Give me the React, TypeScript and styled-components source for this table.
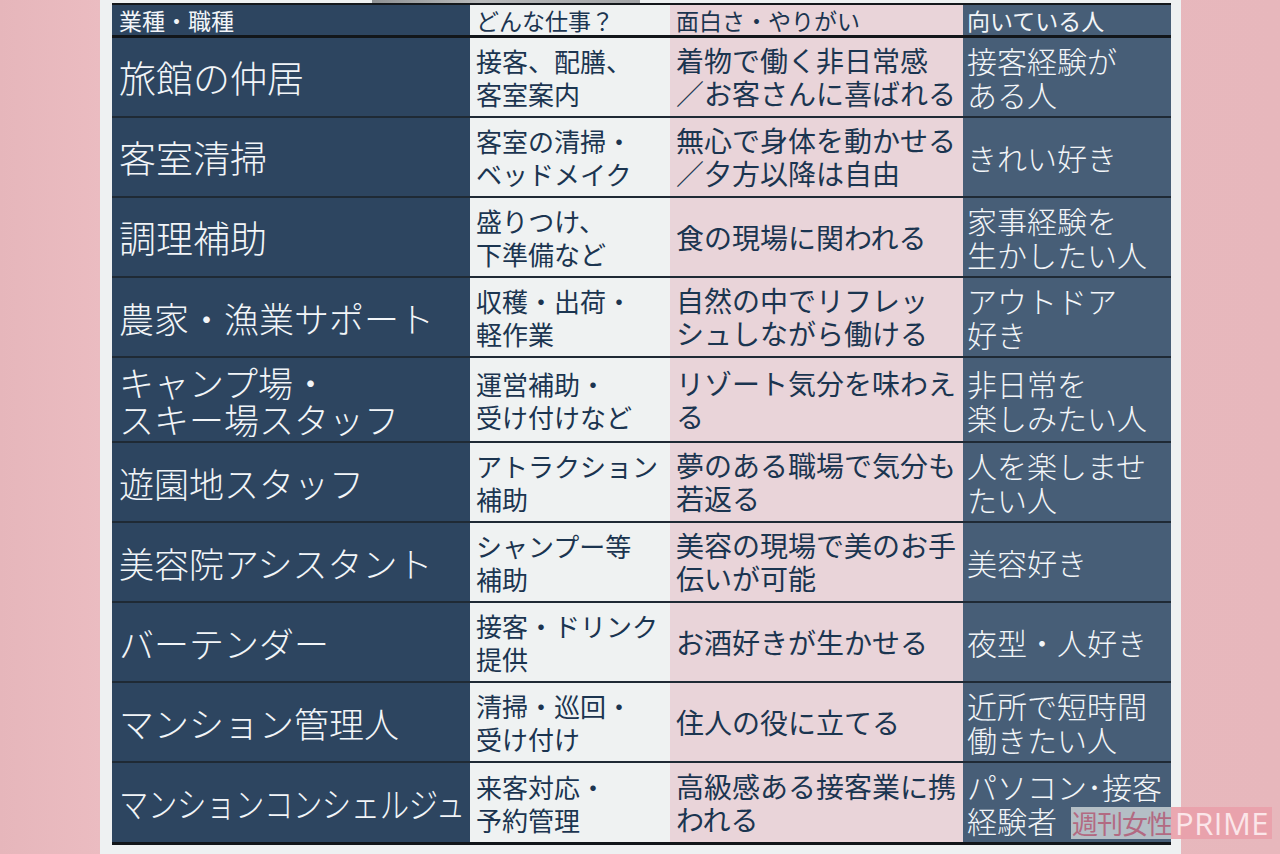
import React from "react";
import styled, { createGlobalStyle } from "styled-components";

const Global = createGlobalStyle`
  html, body { margin: 0; padding: 0; }
  body {
    background: #e8b8bd;
    font-family: "Noto Sans CJK JP", "Noto Sans", sans-serif;
  }
`;

const Page = styled.div`
  width: 1280px;
  height: 854px;
  background: linear-gradient(90deg, #e6b6bb 0%, #ebbcc1 8%, #e7b7bc 100%);
  display: flex;
  overflow: hidden;
`;

const Frame = styled.div`
  margin-left: 100px;
  width: 1081px;
  height: 854px;
  background: #eef1f2;
  box-sizing: border-box;
  padding: 0 10px 0 12px;
  display: flex;
  flex-direction: column;
`;

const TopStrip = styled.div`
  height: 3px;
  display: flex;
`;

const Tab = styled.div`
  margin-left: 260px;
  width: 268px;
  height: 3px;
  background: linear-gradient(90deg, #8f9294, #b8babb 40%, #a3a5a7);
`;

const Table = styled.div`
  width: 1059px;
  border-top: 2px solid #14181c;
  display: flex;
  flex-direction: column;
  position: relative;
`;

const COLS = "358px 200px 293px 208px";

const HeaderRow = styled.div`
  display: grid;
  grid-template-columns: ${COLS};
  height: 30px;
  border-bottom: 3px solid #12161a;
`;

const Row = styled.div<{ $h: number; $last?: boolean }>`
  display: grid;
  grid-template-columns: ${COLS};
  height: ${(p) => p.$h}px;
  border-bottom: ${(p) => (p.$last ? "3px solid #12161a" : "2px solid #1f2a35")};
`;

type Tone = "navy" | "light" | "pink" | "slate";

const bg: Record<Tone, string> = {
  navy: "#2d4560",
  light: "#eff2f2",
  pink: "#e9d4d9",
  slate: "#475e77",
};
const fg: Record<Tone, string> = {
  navy: "#f2f5f8",
  light: "#1b3550",
  pink: "#1b3550",
  slate: "#f2f5f8",
};

const HeadCell = styled.div<{ $tone: Tone; $pad: number }>`
  background: ${(p) => bg[p.$tone]};
  color: ${(p) => fg[p.$tone]};
  padding-left: ${(p) => p.$pad}px;
  font-size: 23px;
  line-height: 30px;
  white-space: nowrap;
`;

const Cell = styled.div<{ $tone: Tone; $pad: number; $size: number; $lh: number; $weight?: number }>`
  background: ${(p) => bg[p.$tone]};
  color: ${(p) => fg[p.$tone]};
  padding-left: ${(p) => p.$pad}px;
  font-size: ${(p) => p.$size}px;
  line-height: ${(p) => p.$lh}px;
  font-weight: ${(p) => p.$weight ?? 400};
  display: flex;
  align-items: center;
  white-space: nowrap;
  overflow: hidden;
`;

const Condensed = styled.span`
  display: inline-block;
  transform: scaleX(0.84);
  transform-origin: left center;
  letter-spacing: -0.5px;
`;

const Mark = styled.div`
  position: absolute;
  left: 959px;
  bottom: 6px;
  height: 32px;
  width: 201px;
  display: flex;
  white-space: nowrap;
  font-size: 26px;
  line-height: 32px;
`;

const MarkJa = styled.span`
  background: rgba(190, 200, 205, 0.92);
  color: #b26a82;
  padding: 0 1px;
  width: 100px;
  box-sizing: border-box;
  letter-spacing: -1px;
`;

const MarkEn = styled.span`
  background: rgba(233, 160, 170, 0.9);
  color: #fbe6e9;
  font-family: "Open Sans", "Noto Sans", sans-serif;
  font-size: 31px;
  letter-spacing: 0.5px;
  padding: 0 2px 0 4px;
  width: 101px;
  box-sizing: border-box;
`;

type RowData = {
  job: string[];
  what: string[];
  fun: string[];
  who: string[];
  h: number;
  big?: boolean;
  condensed?: boolean;
};

const rows: RowData[] = [
  { job: ["旅館の仲居"], what: ["接客、配膳、", "客室案内"], fun: ["着物で働く非日常感", "／お客さんに喜ばれる"], who: ["接客経験が", "ある人"], h: 78, big: true },
  { job: ["客室清掃"], what: ["客室の清掃・", "ベッドメイク"], fun: ["無心で身体を動かせる", "／夕方以降は自由"], who: ["きれい好き"], h: 78, big: true },
  { job: ["調理補助"], what: ["盛りつけ、", "下準備など"], fun: ["食の現場に関われる"], who: ["家事経験を", "生かしたい人"], h: 78, big: true },
  { job: ["農家・漁業サポート"], what: ["収穫・出荷・", "軽作業"], fun: ["自然の中でリフレッ", "シュしながら働ける"], who: ["アウトドア", "好き"], h: 78 },
  { job: ["キャンプ場・", "スキー場スタッフ"], what: ["運営補助・", "受け付けなど"], fun: ["リゾート気分を味わえ", "る"], who: ["非日常を", "楽しみたい人"], h: 83 },
  { job: ["遊園地スタッフ"], what: ["アトラクション", "補助"], fun: ["夢のある職場で気分も", "若返る"], who: ["人を楽しませ", "たい人"], h: 78 },
  { job: ["美容院アシスタント"], what: ["シャンプー等", "補助"], fun: ["美容の現場で美のお手", "伝いが可能"], who: ["美容好き"], h: 78 },
  { job: ["バーテンダー"], what: ["接客・ドリンク", "提供"], fun: ["お酒好きが生かせる"], who: ["夜型・人好き"], h: 78 },
  { job: ["マンション管理人"], what: ["清掃・巡回・", "受け付け"], fun: ["住人の役に立てる"], who: ["近所で短時間", "働きたい人"], h: 78 },
  { job: ["マンションコンシェルジュ"], what: ["来客対応・", "予約管理"], fun: ["高級感ある接客業に携", "われる"], who: ["パソコン･接客", "経験者"], h: 79, condensed: true },
];

const Lines = ({ lines }: { lines: string[] }) => (
  <div>
    {lines.map((l, i) => (
      <div key={i}>{l}</div>
    ))}
  </div>
);

export default function App() {
  return (
    <>
      <Global />
      <Page>
        <Frame>
          <TopStrip>
            <Tab />
          </TopStrip>
          <Table>
            <HeaderRow>
              <HeadCell $tone="navy" $pad={7}>業種・職種</HeadCell>
              <HeadCell $tone="light" $pad={6}>どんな仕事？</HeadCell>
              <HeadCell $tone="pink" $pad={6}>面白さ・やりがい</HeadCell>
              <HeadCell $tone="slate" $pad={4}>向いている人</HeadCell>
            </HeaderRow>
            {rows.map((r, i) => (
              <Row key={i} $h={r.h} $last={i === rows.length - 1}>
                <Cell $tone="navy" $pad={7} $size={r.big ? 37 : 35} $lh={37} $weight={300}>
                  {r.condensed ? (
                    <Condensed>{r.job[0]}</Condensed>
                  ) : (
                    <Lines lines={r.job} />
                  )}
                </Cell>
                <Cell $tone="light" $pad={6} $size={26} $lh={33}>
                  <Lines lines={r.what} />
                </Cell>
                <Cell $tone="pink" $pad={6} $size={28} $lh={33}>
                  <Lines lines={r.fun} />
                </Cell>
                <Cell $tone="slate" $pad={4} $size={30} $lh={34} $weight={300}>
                  <Lines lines={r.who} />
                </Cell>
              </Row>
            ))}
            <Mark>
              <MarkJa>週刊女性</MarkJa>
              <MarkEn>PRIME</MarkEn>
            </Mark>
          </Table>
        </Frame>
      </Page>
    </>
  );
}
